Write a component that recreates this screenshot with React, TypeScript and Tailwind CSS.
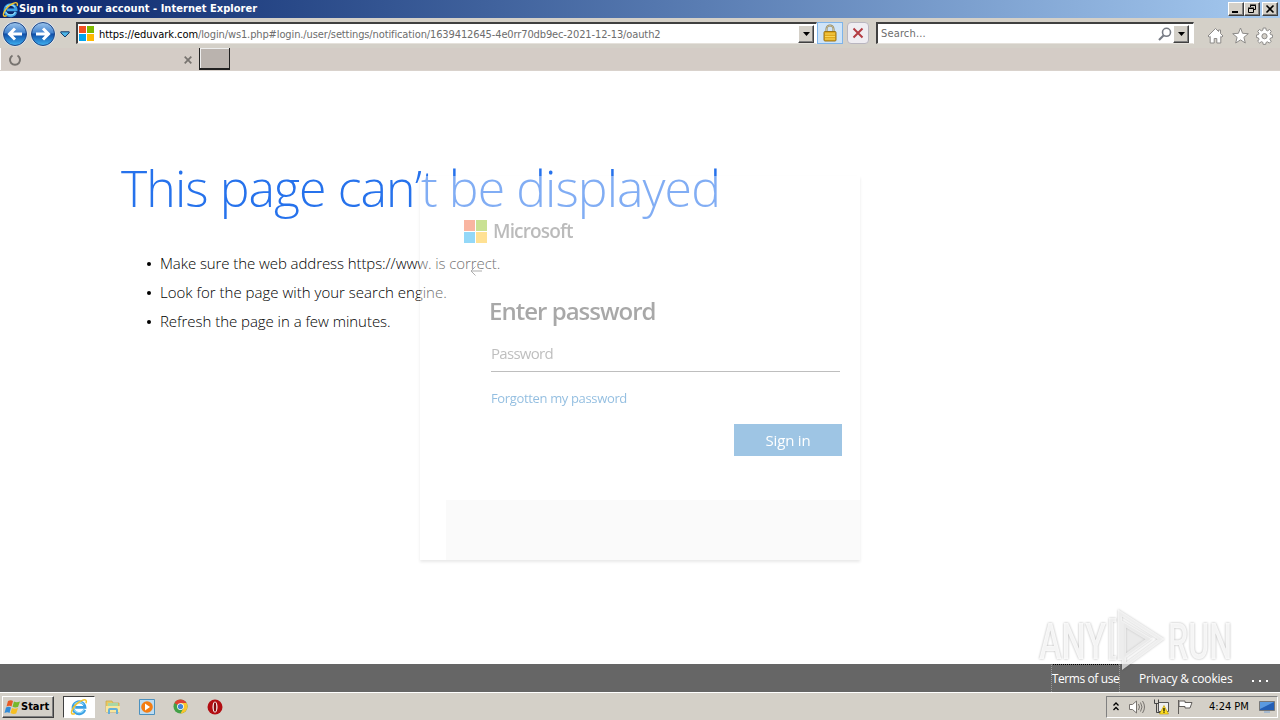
import React from "react";

const tahoma = "font-['DejaVu_Sans_Condensed','DejaVu_Sans',sans-serif]";
const segoe = "font-['Open_Sans',sans-serif]";

const IeLogo: React.FC<{ className?: string }> = ({ className }) => (
  <svg viewBox="0 0 18 18" className={className} fill="none">
    <path
      d="M14.7 11.7A6 6 0 1 1 15 9.4H5.2"
      stroke="#3ba0e4"
      strokeWidth="2.8"
    />
    <path
      d="M14.2 11.3A5.6 5.6 0 0 1 4 11.6M4.2 6.5A6 6 0 0 1 13.8 6.5"
      stroke="#8ad8fa"
      strokeWidth="1.2"
    />
    <path
      d="M16 5.2c1.2-3-.6-4.400-3.800-2.800C7.500 4.200 3 9 1.700 13c-.8 2.800.4 3.800 3.300 2.500"
      stroke="#f3c42e"
      strokeWidth="1.500"
    />
  </svg>
);

const NavButton: React.FC<{ flip?: boolean }> = ({ flip }) => (
  <svg viewBox="0 0 26 26" className={flip ? "size-[26px] -scale-x-100" : "size-[26px]"}>
    <defs>
      <linearGradient id="orb" x1="0" y1="0" x2="0" y2="1">
        <stop offset="0" stopColor="#9cc5ec" />
        <stop offset="0.45" stopColor="#4584cf" />
        <stop offset="0.5" stopColor="#0f4ea8" />
        <stop offset="1" stopColor="#3fb2f2" />
      </linearGradient>
    </defs>
    <circle cx="13" cy="13" r="12.500" fill="#e8eef7" />
    <circle cx="13" cy="13" r="11.500" fill="url(#orb)" stroke="#1f4583" />
    <path
      d="M20 13H8M13 7.500 7.500 13l5.500 5.500"
      fill="none"
      stroke="#fff"
      strokeWidth="3"
    />
  </svg>
);

const MsLogo: React.FC<{ className?: string }> = ({ className }) => (
  <div className={`grid grid-cols-2 gap-px ${className}`}>
    <div className="bg-[#f25022]" />
    <div className="bg-[#7fba00]" />
    <div className="bg-[#00a4ef]" />
    <div className="bg-[#ffb900]" />
  </div>
);

const raised =
  "bg-[#d4d0c8] border border-t-white border-l-white border-r-[#404040] border-b-[#404040] shadow-[inset_-1px_-1px_0_#808080]";

const DropButton = () => (
  <div className={`flex h-[18px] w-[16px] items-center justify-center ${raised}`}>
    <svg viewBox="0 0 7 4" className="h-1 w-[7px]">
      <path d="M0 0h7L3.500 4z" fill="#000" />
    </svg>
  </div>
);

const TitleBar = () => (
  <div className="flex h-[18px] items-center bg-gradient-to-r from-[#0a246a] to-[#a6caf0] pl-[2px] pr-[2px]">
    <IeLogo className="size-[17px]" />
    <span className={`whitespace-nowrap text-[11px] font-bold leading-[18px] tracking-[0.040px] text-white ${tahoma}`}>
      Sign in to your account - Internet Explorer
    </span>
    <div className="ml-auto flex">
      <div className={`flex h-[14px] w-[16px] items-center justify-center ${raised}`}>
        <svg viewBox="0 0 10 10" className="size-[10px]">
          <path d="M1 7h6v2H1z" />
        </svg>
      </div>
      <div className={`flex h-[14px] w-[16px] items-center justify-center ${raised}`}>
        <svg viewBox="0 0 10 10" className="size-[10px]" fill="none" stroke="#000">
          <path d="M3.500 3V1.500h5v4H7M3 1h6M1.500 4.500h5v4h-5zM1 4h6" />
        </svg>
      </div>
      <div className={`ml-[2px] flex h-[14px] w-[16px] items-center justify-center ${raised}`}>
        <svg viewBox="0 0 10 10" className="size-[10px]" stroke="#000" strokeWidth="1.600">
          <path d="m1.500 1.500 7 7m0-7-7 7" />
        </svg>
      </div>
    </div>
  </div>
);

const AddressRow = () => (
  <div className="flex h-[30px] bg-[#d4d0c8] pt-[3px]">
    <div className="ml-[2px] flex w-[74px] items-center pb-px">
      <NavButton />
      <div className="ml-[2px]">
        <NavButton flip />
      </div>
      <svg viewBox="0 0 10 7" className="ml-[4px] h-[7px] w-[10px]">
        <path d="M.8.8h8.400v1L5 6 .8 1.800z" fill="#4bb4e6" stroke="#173a68" />
      </svg>
    </div>
    <div className="mt-px flex h-[22px] w-[741px] items-center border border-l-2 border-t-2 border-[#404040] border-b-[#e5e1db] border-r-white bg-white pl-px">
      <MsLogo className="size-[15px]" />
      <div className={`ml-[5px] whitespace-nowrap pt-px text-[11px] leading-[17px] text-[#6d6d6d] ${tahoma}`}>
        <span className="tracking-[-0.060px] text-black">https://eduvark.com</span>
        <span className="tracking-[-0.120px]">/login/ws1.php#login./user/settings/notification/1639412645-4e0rr70db9ec-2021-12-13/oauth2</span>
      </div>
      <div className="ml-auto mr-[2px]">
        <DropButton />
      </div>
    </div>
    <div className="mt-px flex h-[22px] w-[26px] items-center justify-center border border-[#7eb4ea] bg-[#cfe4f8]">
      <svg viewBox="0 0 14 18" className="h-[18px] w-[14px]">
        <path d="M3.500 9V5a3.500 3.500 0 0 1 7 0v4" fill="none" stroke="#8b7f5e" strokeWidth="2" />
        <path d="M3.500 9V5a3.500 3.500 0 0 1 7 0v4" fill="none" stroke="#e4dcae" strokeWidth=".7" />
        <rect x="1" y="7.500" width="12" height="9.500" rx="1" fill="#e1a91c" stroke="#9b7517" />
        <path d="M2 10h10M2 12.500h10M2 15h10" stroke="#f8d65b" />
      </svg>
    </div>
    <div className="mt-px ml-[4px] flex h-[22px] w-[22px] items-center justify-center rounded-sm border border-[#b9b6c0] bg-[#efedf2]">
      <svg viewBox="0 0 12 12" className="size-[12px]" fill="none" strokeWidth="2">
        <path d="m1.500 1.500 9 9m0-9-9 9" stroke="#b33c43" />
      </svg>
    </div>
    <div className="mt-px ml-[7px] flex h-[22px] w-[318px] items-center border border-l-2 border-t-2 border-[#404040] border-b-[#e5e1db] border-r-white bg-white pl-[3px]">
      <span className={`pt-[2px] text-[11px] tracking-[0.150px] text-[#6d6d6d] ${tahoma}`}>Search...</span>
      <svg viewBox="0 0 14 14" className="ml-auto size-[14px]" fill="none" stroke="#777b84">
        <circle cx="8.500" cy="5.300" r="4" strokeWidth="1.600" />
        <path d="m5.500 8.500-4.500 4.500" strokeWidth="2.200" />
      </svg>
      <div className="ml-px mr-[4px]">
        <DropButton />
      </div>
    </div>
    <div className="ml-[13px] mt-[6px] flex gap-[8px]">
      <svg viewBox="0 0 17 18" className="h-[18px] w-[17px]" fill="#fff" stroke="#8c8a88">
        <path d="M8.500 1.500 1 9l1.200 1.200 1-.8V16h4v-4.500h2.600V16h4V9.400l1 .8L16 9l-2.500-2.500V3h-2v1.500z" />
      </svg>
      <svg viewBox="0 0 17 18" className="h-[18px] w-[17px]" fill="#fff" stroke="#8c8a88">
        <path d="m8.500 1 2.100 5.300 5.700.4-4.400 3.600 1.400 5.700-4.800-3.100L3.700 16l1.400-5.700L.7 6.700l5.700-.4z" />
      </svg>
      <svg viewBox="0 0 17 18" className="-ml-px h-[18px] w-[17px]" fill="#fff" stroke="#8c8a88">
        <path d="M7.200 1h2.600l.4 2.200 1.400.6 1.900-1.300 1.800 1.800L14 6.200l.6 1.400 2 .4v2.600l-2.100.4-.6 1.400 1.300 1.900-1.800 1.800-1.900-1.300-1.400.6-.4 2H7.200l-.4-2.100-1.400-.6-1.900 1.300-1.800-1.800L3 12.300l-.6-1.400-2-.4V8l2.100-.4L3 6.200 1.700 4.300l1.800-1.800 1.900 1.300 1.400-.6z" />
        <circle cx="8.500" cy="9.200" r="2.600" fill="#d4d0c8" />
      </svg>
    </div>
  </div>
);

const TabRow = () => (
  <div className="flex h-[23px] border-b border-[#d9d2cc] bg-[#d4ccc6]">
    <div className="flex w-[199px] items-center border-l border-white pl-[7px] pr-[7px] pt-[2px]">
      <svg viewBox="0 0 14 14" className="size-[14px]" fill="none" stroke="#77736f" strokeWidth="2">
        <path d="M4.500 2.500a5 5 0 1 0 5 0" />
      </svg>
      <svg viewBox="0 0 8 8" className="ml-auto size-[8px]" stroke="#77736f" strokeWidth="1.700">
        <path d="m.7.7 6.600 6.600m0-6.600L.7 7.300" />
      </svg>
    </div>
    <div className="h-[22px] w-[31px] border border-b-2 border-t-0 border-[#202020] bg-[#bab3ae] shadow-[inset_1px_1px_0_#eee]" />
  </div>
);

const SignInCard = () => (
  <div className={`absolute left-[420px] top-[105px] h-[384px] w-[440px] bg-white opacity-[0.42] shadow-[0_2px_3px_rgba(0,0,0,0.220)] ${segoe}`}>
    <div className="flex h-full flex-col">
      <div className="ml-[44px] mt-[44px] flex h-[23px] items-center gap-[6px]">
        <MsLogo className="size-[23px]" />
        <span className="text-[19px] font-semibold leading-[23px] tracking-[-0.850px] text-[#606060]">
          Microsoft
        </span>
      </div>
      <svg viewBox="0 0 12 10" className="ml-[50px] mt-[23px] h-[10px] w-[12px]" fill="none" stroke="#404040">
        <path d="M12 5H1M5.500.500 1 5l4.500 4.500" />
      </svg>
      <h2 className="ml-[69px] mt-[20px] text-[24px] font-semibold leading-[30px] tracking-[-0.980px] text-[#333]">
        Enter password
      </h2>
      <div className="ml-[71px] mt-[7px] h-[39px] w-[349px] border-b border-[#666] pt-[9px] text-[15px] leading-[22px] tracking-[-0.700px] text-[#666]">
        Password
      </div>
      <a className="ml-[71px] mt-[16px] text-[13px] leading-[20px] tracking-[-0.350px] text-[#0067b8]">
        Forgotten my password
      </a>
      <button className="ml-[314px] mt-[16px] h-[32px] w-[108px] bg-[#1a77bf] text-[15px] tracking-[-0.200px] text-white">
        Sign in
      </button>
      <div className="ml-[26px] mt-auto h-[60px] bg-[#f5f5f5]" />
    </div>
  </div>
);

const Watermark = () => (
  <svg
    viewBox="0 0 200 64"
    className="absolute left-[1036px] top-[608px] h-[64px] w-[200px] overflow-visible drop-shadow-[0_0_1px_rgba(0,0,0,0.350)]"
    fill="none"
  >
    <g fontFamily="Roboto, sans-serif" fontSize="50" fontWeight="500" fill="#fff" fillOpacity=".85">
      <text x="3" y="51" textLength="67" lengthAdjust="spacingAndGlyphs">ANY</text>
      <text x="132" y="51" textLength="64" lengthAdjust="spacingAndGlyphs">RUN</text>
    </g>
    <g stroke="#fff" strokeOpacity=".7" strokeWidth="4">
      <path d="M80 50h-5V12h5M84 52V5l41 26-37 27V16l25 15-25 18" />
    </g>
    <path d="M88 15v34l27-18z" fill="#ddd" fillOpacity=".2" />
  </svg>
);

const tips = [
  ["Make sure the web address https://www. is correct.", "tracking-[-0.080px]"],
  ["Look for the page with your search engine.", "tracking-[0.010px]"],
  ["Refresh the page in a few minutes.", "tracking-[-0.040px]"],
];

const ErrorPage = () => (
  <main className={`relative h-[593px] bg-white ${segoe}`}>
    <div className="pl-[121px] pt-[83px]">
      <h1 className="whitespace-nowrap text-[50px] font-light leading-[68px] tracking-[-0.930px] text-[#2672ec]">
        This page can’t be displayed
      </h1>
      <ul className="pt-[27px]">
        {tips.map(([tip, spacing]) => (
          <li key={tip} className={`flex h-[29px] items-center whitespace-nowrap pl-[26px] text-[15px] font-light text-black ${spacing}`}>
            <span className="mr-[9px] size-1 rounded-full bg-black" />
            {tip}
          </li>
        ))}
      </ul>
    </div>
    <SignInCard />
  </main>
);

const Footer = () => (
  <footer className={`flex h-[28px] items-center justify-end bg-[#666] text-[12px] text-white ${segoe}`}>
    <a className="flex h-[28px] w-[69px] items-center justify-center whitespace-nowrap border border-b-0 border-dotted border-[#999] border-t-black pt-px tracking-[-0.400px]">
      Terms of use
    </a>
    <a className="ml-[19px] w-[94px] whitespace-nowrap pt-px tracking-[-0.180px]">Privacy &amp; cookies</a>
    <svg viewBox="0 0 17 3" className="ml-[19px] mr-[11px] mt-1.5 h-[3px] w-[17px]" fill="#fff">
      <path d="M0 0h2v2H0zM7 0h2v2H7zM14 0h2v2h-2z" />
    </svg>
  </footer>
);

const Taskbar = () => (
  <div className={`flex h-[28px] items-center border-t border-white bg-[#d4d0c8] pl-[2px] text-[11px] text-black ${tahoma}`}>
    <div className={`flex h-[22px] w-[52px] items-center pl-px font-bold ${raised}`}>
      <svg viewBox="0 0 17 16" className="h-[16px] w-[17px]">
        <path d="M4 2q3-1.500 5 0L7.500 7.500q-2-1.500-5 0z" fill="#e85a24" />
        <path d="M10 2.500q2.500 1.500 6 0L14 8q-3 1-5.500-.3z" fill="#76b82a" />
        <path d="M2 8.500q3-1.500 5 0L5.500 14q-2-1.500-5 0z" fill="#318bd8" />
        <path d="M8 9q2.500 1.500 6 0l-1.800 5.500q-3 1-5.700-.5z" fill="#f6bf22" />
      </svg>
      <span className="pt-[2px]">Start</span>
    </div>
    <div className="ml-[9px] flex h-[22px] w-[32px] items-center justify-center border border-[#404040] border-b-white border-r-white bg-white">
      <IeLogo className="size-[18px]" />
    </div>
    <svg viewBox="0 0 16 16" className="ml-[10px] size-[16px]">
      <path d="M1 2h6l1 2h6v9H1z" fill="#e9c963" stroke="#c7a646" strokeWidth=".7" />
      <path d="M3 4h10v4H3z" fill="#a9d7a5" />
      <path d="M1 7h14v6H1z" fill="#f8e69c" />
      <path d="M3 15v-4q0-2 2-2h6q2 0 2 2v4h-2v-4H5v4z" fill="#64afd8" />
    </svg>
    <svg viewBox="0 0 16 16" className="ml-[18px] size-[16px]">
      <path d="M.5.5h15v15H.500z" fill="#bddcf2" stroke="#4c91bf" />
      <circle cx="8" cy="8" r="5.800" fill="#f47d13" />
      <path d="m6 4.500 5 3.500-5 3.500z" fill="#fff" />
    </svg>
    <svg viewBox="0 0 16 16" className="ml-[18px] size-[15px]">
      <circle cx="8" cy="8" r="7.500" fill="#43a047" />
      <path d="M8 8 1.500 4.200A7.500 7.500 0 0 1 14.500 4.300H8z" fill="#de4132" />
      <path d="M8 15.500 11.200 9.500 8 4.300h6.500A7.500 7.500 0 0 1 8 15.500z" fill="#fbc52d" />
      <circle cx="8" cy="8" r="3.600" fill="#fff" />
      <circle cx="8" cy="8" r="2.800" fill="#4285d8" />
    </svg>
    <svg viewBox="0 0 16 16" className="ml-[19px] size-[16px]">
      <circle cx="8" cy="8" r="7.500" fill="#b20d12" />
      <ellipse cx="8" cy="8" rx="2.500" ry="5.500" fill="#fff" />
      <ellipse cx="8" cy="8" rx="1.300" ry="4.800" fill="#830a0d" />
    </svg>
    <div className="ml-auto mr-[2px] flex h-[22px] w-[172px] items-center border border-[#808080] border-b-white border-r-white pl-[6px]">
      <svg viewBox="0 0 6 9" className="h-[9px] w-[6px]" fill="none" stroke="#000" strokeWidth="1.300">
        <path d="m.5 3.500 2.500-2.500 2.500 2.500M.5 8l2.500-2.500L5.500 8" />
      </svg>
      <svg viewBox="0 0 16 14" className="ml-[10px] h-[14px] w-[16px]" fill="#fff" stroke="#77736f">
        <path d="M.5 4.500h3L7.500 1v12l-4-3.500h-3z" />
        <path d="M9.500 4q2 3 0 6M11.500 2.500q3 4.500 0 9M13.500 1q4 6 0 12" fill="none" />
      </svg>
      <svg viewBox="0 0 16 16" className="ml-[8px] size-[16px]">
        <path d="M5.500 3.500h10v9h-10z" fill="#eee" stroke="#555" />
        <path d="M1.500.5v4h4v-4M3.500 4.500v9h4" fill="none" stroke="#444" />
        <path d="M11 6.500 6.500 15h9z" fill="#ffdf21" stroke="#b99400" strokeWidth=".6" />
        <path d="M10.400 9h1.200v3h-1.200zm0 3.600h1.200v1.200h-1.200z" />
      </svg>
      <svg viewBox="0 0 16 16" className="ml-[8px] size-[16px]" fill="#fff" stroke="#625f5c">
        <path d="M1.500 1v14M2 2h6v1.500h7L13 9H8V7.500H2z" />
      </svg>
      <span className="ml-[16px] whitespace-nowrap pt-[2px]">4:24 PM</span>
      <svg viewBox="0 0 16 14" className="ml-auto mr-[2px] h-[14px] w-[16px]">
        <path d="M.5 1.500h15v9H.500z" fill="#245fb5" stroke="#777" />
        <path d="M1 2h14L1 9z" fill="#5b9ae0" />
        <path d="M5 11h6v2H5z" fill="#a6b9ce" />
      </svg>
    </div>
  </div>
);

const App: React.FC = () => {
  return (
    <div className="relative flex h-[720px] w-[1280px] flex-col overflow-hidden bg-white">
      <TitleBar />
      <AddressRow />
      <TabRow />
      <ErrorPage />
      <Footer />
      <Taskbar />
      <Watermark />
    </div>
  );
};

export default App;
